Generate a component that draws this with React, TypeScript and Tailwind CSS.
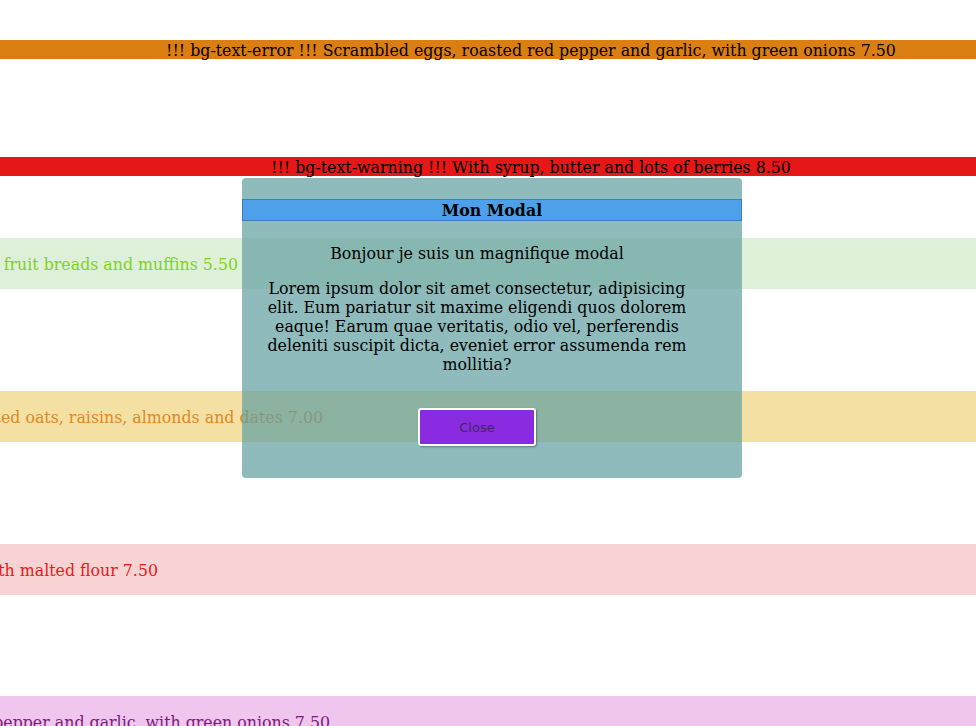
import React from "react";

function EndBar({
  bg,
  color,
  end,
  text,
  className,
}: {
  bg: string;
  color: string;
  end: string;
  text: string;
  className: string;
}) {
  return (
    <div className={`${bg} ${className} h-[51px] pt-[17px]`}>
      <div className={`${end} flex justify-end leading-[19px] ${color}`}>
        <span className="whitespace-nowrap">{text}</span>
      </div>
    </div>
  );
}

export default function App() {
  return (
    <div className="relative w-[976px] h-[726px] overflow-hidden bg-white font-['DejaVu_Serif',serif] text-[15.8px] text-black">
      <div className="mt-[40px] h-[19px] bg-[#db7f12] flex justify-center pl-[86px] leading-[19px] pt-px">
        <span className="whitespace-nowrap">
          !!! bg-text-error !!! Scrambled eggs, roasted red pepper and garlic, with green onions 7.50
        </span>
      </div>
      <div className="mt-[98px] h-[19px] bg-[#e61717] flex justify-center pl-[86px] leading-[19px] pt-px">
        <span className="whitespace-nowrap">
          !!! bg-text-warning !!! With syrup, butter and lots of berries 8.50
        </span>
      </div>

      <EndBar
        className="mt-[62px]"
        bg="bg-[#dff0d8]"
        color="text-[#7ed321]"
        end="w-[238px]"
        text="Assorted fresh fruit breads and muffins 5.50"
      />
      <EndBar
        className="mt-[102px]"
        bg="bg-[#f5e0a3]"
        color="text-[#e0891e]"
        end="w-[323px]"
        text="Homemade granola with toasted oats, raisins, almonds and dates 7.00"
      />
      <EndBar
        className="mt-[102px]"
        bg="bg-[#f9d3d4]"
        color="text-[#e81818]"
        end="w-[158px]"
        text="Light Belgian waffles made with malted flour 7.50"
      />
      <EndBar
        className="mt-[101px]"
        bg="bg-[#f0c6ee]"
        color="text-[#7a1a7a]"
        end="w-[330px]"
        text="Scrambled eggs, roasted red pepper and garlic, with green onions 7.50"
      />

      <div className="absolute left-[242px] top-[178px] w-[500px] h-[300px] rounded-[4px] bg-[rgba(95,158,160,0.7)] pt-[21px]">
        <div className="h-[22px] border border-[#3b7fc4] bg-[#4ea0e8] text-center font-bold leading-[22px]">
          Mon Modal
        </div>
        <div className="ml-[20px] w-[430px] flex flex-col items-center text-center">
          <p className="mt-[23px] leading-[19px]">Bonjour je suis un magnifique modal</p>
          <p className="mt-[16px] leading-[19px]">
            Lorem ipsum dolor sit amet consectetur, adipisicing elit. Eum pariatur sit maxime
            eligendi quos dolorem eaque! Earum quae veritatis, odio vel, perferendis deleniti
            suscipit dicta, eveniet error assumenda rem mollitia?
          </p>
          <button className="mt-[34px] w-[118px] h-[38px] pt-px rounded-[3px] border-2 border-white bg-[#8a2be2] text-[13px] text-[#3c2a5c] font-['DejaVu_Sans',sans-serif] shadow-[1px_1px_2px_rgba(0,0,0,0.35)]">
            Close
          </button>
        </div>
      </div>
    </div>
  );
}
